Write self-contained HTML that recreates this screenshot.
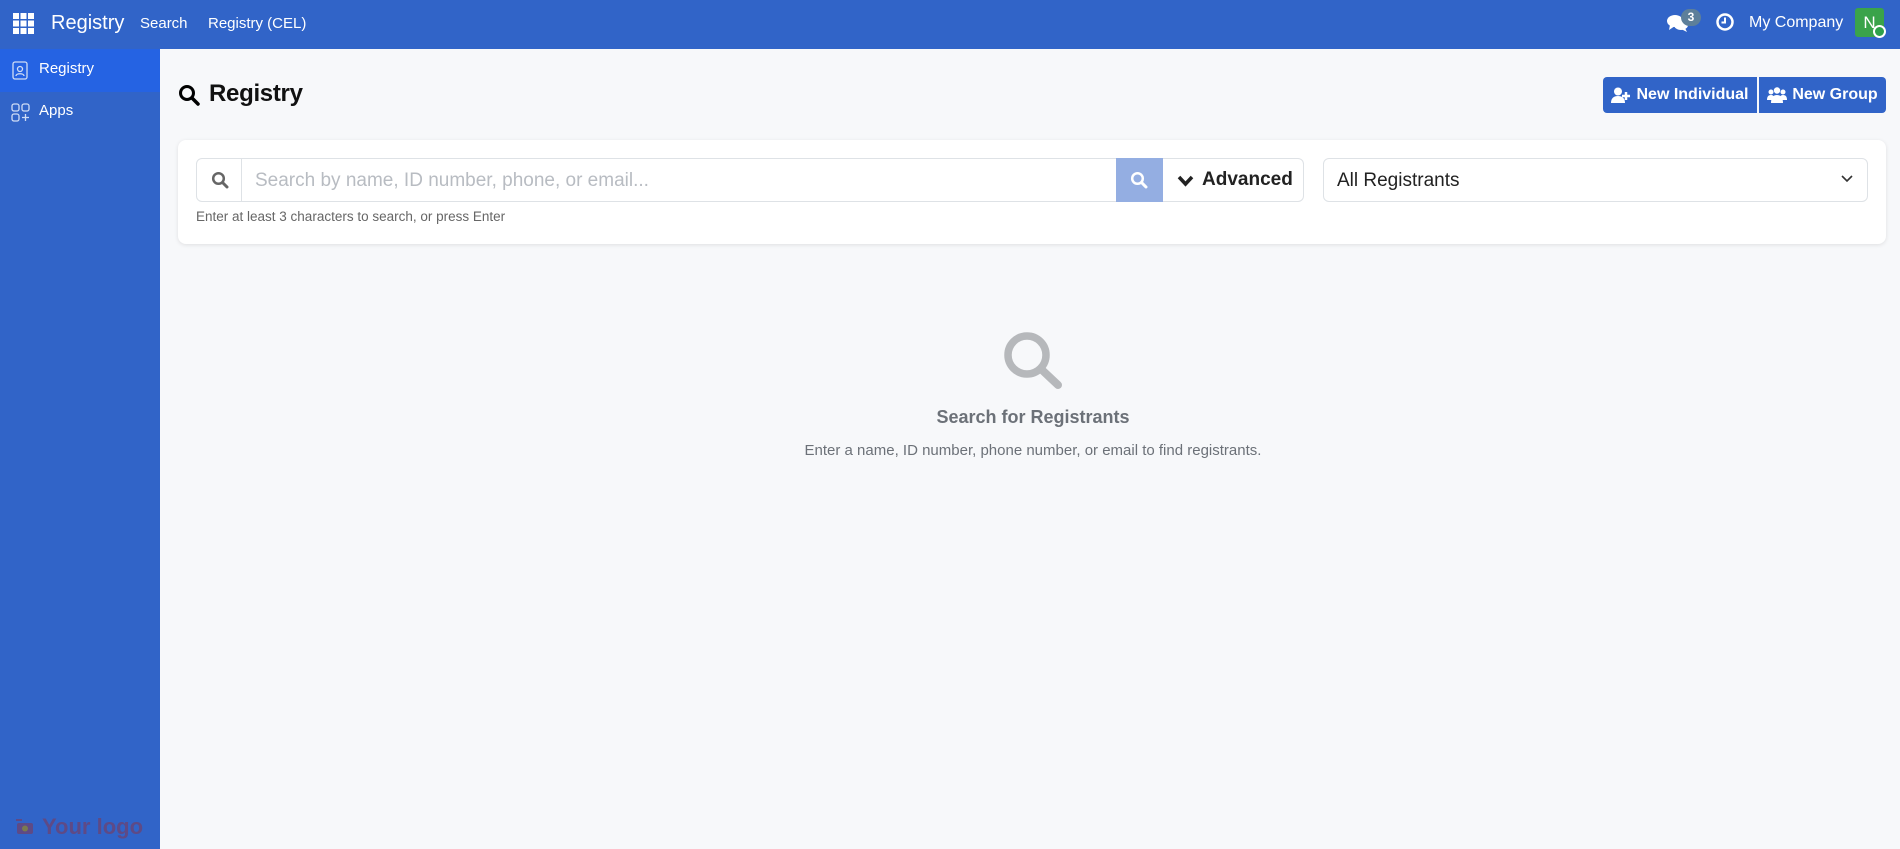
<!DOCTYPE html>
<html><head><meta charset="utf-8"><style>
*{box-sizing:border-box;margin:0;padding:0}
body{width:1900px;height:849px;overflow:hidden;background:#f7f8fa;font-family:"Liberation Sans",sans-serif;position:relative}
.top{position:absolute;left:0;top:0;width:1900px;height:49px;background:#3164c8;color:#fff}
.side{position:absolute;left:0;top:49px;width:160px;height:800px;background:#3164c8;color:#fff}
.abs{position:absolute}
.btn{position:absolute;top:77px;height:36px;background:#3164c8;color:#fff;font-weight:bold;font-size:16px;display:flex;align-items:center;justify-content:center;gap:5px}
.card{position:absolute;left:178px;top:140px;width:1708px;height:104px;background:#fff;border-radius:8px;box-shadow:0 1px 4px rgba(0,0,0,.1)}
</style></head><body>
<div class="top">
  <svg class="abs" style="left:13px;top:13px" width="21" height="21" viewBox="0 0 21 21" fill="#fff">
    <rect x="0" y="0" width="6" height="6"/><rect x="7.5" y="0" width="6" height="6"/><rect x="15" y="0" width="6" height="6"/>
    <rect x="0" y="7.5" width="6" height="6"/><rect x="7.5" y="7.5" width="6" height="6"/><rect x="15" y="7.5" width="6" height="6"/>
    <rect x="0" y="15" width="6" height="6"/><rect x="7.5" y="15" width="6" height="6"/><rect x="15" y="15" width="6" height="6"/>
  </svg>
  <div class="abs" style="left:51px;top:12px;font-size:20px">Registry</div>
  <div class="abs" style="left:140px;top:15px;font-size:15px">Search</div>
  <div class="abs" style="left:208px;top:15px;font-size:15px">Registry (CEL)</div>
  <svg class="abs" style="left:1667px;top:13px" width="22" height="20" viewBox="0 0 22 20" fill="#fff"><ellipse cx="8" cy="8" rx="8" ry="6"/><path d="M3 12 L2 17 L8 13Z"/><ellipse cx="14" cy="12" rx="7" ry="5"/><path d="M18 15 L20 19 L14 16Z"/></svg>
  <div class="abs" style="left:1681px;top:9px;width:20px;height:17px;border-radius:9px;background:#5d7f9a;font-size:12px;font-weight:bold;text-align:center;line-height:17px">3</div>
  <svg class="abs" style="left:1716px;top:13px" width="18" height="18" viewBox="0 0 18 18"><circle cx="9" cy="9" r="7.5" fill="none" stroke="#fff" stroke-width="2.5"/><path d="M9 4.5V9.5H5.5" fill="none" stroke="#fff" stroke-width="2"/></svg>
  <div class="abs" style="left:1749px;top:14px;font-size:16px">My Company</div>
  <div class="abs" style="left:1855px;top:8px;width:29px;height:29px;background:#3aa34a;border-radius:3px;font-size:17px;text-align:center;line-height:29px">N</div>
  <div class="abs" style="left:1873px;top:25px;width:13px;height:13px;border-radius:50%;background:#2ea04a;border:2px solid #fff"></div>
</div>
<div class="side">
  <div class="abs" style="left:0;top:0;width:160px;height:43px;background:#2563e3"></div>
  <svg class="abs" style="left:12px;top:12px" width="16" height="19" viewBox="0 0 16 19" fill="none" stroke="#cfdcf5" stroke-width="1.3"><rect x="1" y="1" width="14" height="17" rx="2"/><circle cx="8" cy="8" r="2.5"/><path d="M4 15c0-3 8-3 8 0"/></svg>
  <div class="abs" style="left:39px;top:11px;font-size:15px">Registry</div>
  <svg class="abs" style="left:11px;top:54px" width="19" height="19" viewBox="0 0 19 19" fill="none" stroke="#cfdcf5" stroke-width="1.3"><rect x="1" y="1" width="7" height="7" rx="2"/><rect x="11" y="1" width="7" height="7" rx="2"/><rect x="1" y="11" width="7" height="7" rx="2"/><path d="M14.5 11v7M11 14.5h7"/></svg>
  <div class="abs" style="left:39px;top:53px;font-size:15px">Apps</div>
  <svg class="abs" style="left:16px;top:770px" width="18" height="16" viewBox="0 0 18 16" fill="#5e4a86"><rect x="1" y="4" width="16" height="11" rx="2"/><rect x="0" y="0" width="6" height="2"/><circle cx="9" cy="9.5" r="3" fill="#7a7a50"/></svg>
  <div class="abs" style="left:42px;top:765px;font-size:22px;font-weight:bold;color:#5e4a86">Your logo</div>
</div>
<svg class="abs" style="left:178px;top:84px" width="22" height="22" viewBox="0 0 22 22"><circle cx="9" cy="9" r="6.5" fill="none" stroke="#000" stroke-width="3"/><path d="M14 14L20 20" stroke="#000" stroke-width="3.5" stroke-linecap="round"/></svg>
<div class="abs" style="left:209px;top:80px;font-size:24px;color:#111;font-weight:bold;letter-spacing:-0.3px">Registry</div>
<div class="btn" style="left:1603px;width:154px;border-radius:4px 0 0 4px"><svg width="20" height="16" viewBox="0 0 20 16" fill="#fff"><circle cx="7" cy="4.5" r="4"/><path d="M0 16c0-5 3-7 7-7s7 2 7 7Z"/><path d="M15 5v8M11 9h8" stroke="#fff" stroke-width="2.5"/></svg>New Individual</div>
<div class="btn" style="left:1759px;width:127px;border-radius:0 4px 4px 0"><svg width="20" height="16" viewBox="0 0 20 16" fill="#fff"><circle cx="10" cy="3.5" r="3.2"/><circle cx="4" cy="5" r="2.5"/><circle cx="16" cy="5" r="2.5"/><path d="M4 16c0-5 2-8 6-8s6 3 6 8Z"/><path d="M0 13c0-3 1-5 4-5s3 2 3 5Z"/><path d="M13 13c0-3 0-5 3-5s4 2 4 5Z"/></svg>New Group</div>
<div class="card">
  <div class="abs" style="left:18px;top:18px;width:922px;height:44px;border:1px solid #dee2e6;border-radius:6px 0 0 6px"></div>
  <div class="abs" style="left:63px;top:18px;width:1px;height:44px;background:#dee2e6"></div>
  <svg class="abs" style="left:33px;top:31px" width="18" height="18" viewBox="0 0 18 18"><circle cx="7.5" cy="7.5" r="5.3" fill="none" stroke="#666" stroke-width="2.5"/><path d="M11.5 11.5L16 16" stroke="#666" stroke-width="3" stroke-linecap="round"/></svg>
  <div class="abs" style="left:77px;top:30px;font-size:19px;color:#b8bcc2">Search by name, ID number, phone, or email...</div>
  <div class="abs" style="left:938px;top:18px;width:47px;height:44px;background:#94aee2"></div>
  <svg class="abs" style="left:952px;top:31px" width="18" height="18" viewBox="0 0 18 18"><circle cx="7.5" cy="7.5" r="5.3" fill="none" stroke="#fff" stroke-width="2.5"/><path d="M11.5 11.5L16 16" stroke="#fff" stroke-width="3" stroke-linecap="round"/></svg>
  <div class="abs" style="left:985px;top:18px;width:141px;height:44px;border:1px solid #dee2e6;border-left:none;border-radius:0 6px 6px 0"></div>
  <svg class="abs" style="left:999px;top:35px" width="17" height="12" viewBox="0 0 17 12"><path d="M2 2L8.5 9L15 2" fill="none" stroke="#222" stroke-width="3.5"/></svg>
  <div class="abs" style="left:1024px;top:29px;font-size:19px;font-weight:bold;color:#222">Advanced</div>
  <div class="abs" style="left:1145px;top:18px;width:545px;height:44px;border:1px solid #dee2e6;border-radius:6px"></div>
  <div class="abs" style="left:1159px;top:30px;font-size:19px;color:#222">All Registrants</div>
  <svg class="abs" style="left:1663px;top:35px" width="12" height="8" viewBox="0 0 12 8"><path d="M1 1L6 6L11 1" fill="none" stroke="#333" stroke-width="1.6"/></svg>
  <div class="abs" style="left:18px;top:69px;font-size:13.5px;color:#666">Enter at least 3 characters to search, or press Enter</div>
</div>
<svg class="abs" style="left:1002px;top:330px" width="61" height="61" viewBox="0 0 61 61"><circle cx="25" cy="25" r="19" fill="none" stroke="#b6b8bb" stroke-width="7.5"/><path d="M39 39L56 55" stroke="#b6b8bb" stroke-width="8" stroke-linecap="round"/></svg>
<div class="abs" style="left:0;width:2066px;top:407px;text-align:center;font-size:18px;font-weight:bold;color:#6c7178">Search for Registrants</div>
<div class="abs" style="left:0;width:2066px;top:442px;text-align:center;font-size:15px;color:#6c7178">Enter a name, ID number, phone number, or email to find registrants.</div>
</body></html>
